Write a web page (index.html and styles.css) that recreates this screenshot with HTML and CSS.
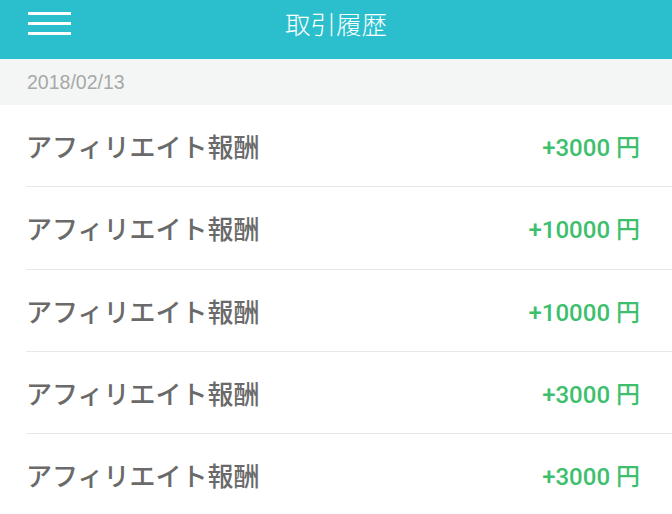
FILE: index.html
```html
<!DOCTYPE html>
<html lang="ja">
<head>
  <meta charset="UTF-8">
  <meta name="viewport" content="width=device-width, initial-scale=1.0">
  <title>取引履歴</title>
  <link rel="stylesheet" href="styles.css">
</head>
<body>
  <header class="topbar">
    <button class="menu-btn" aria-label="menu">
      <span></span>
      <span></span>
      <span></span>
    </button>
    <h1 class="title">取引履歴</h1>
  </header>

  <div class="date-bar">2018/02/13</div>

  <ul class="history">
    <li class="history-row">
      <span class="label">アフィリエイト報酬</span>
      <span class="amount">+3000 円</span>
    </li>
    <li class="history-row">
      <span class="label">アフィリエイト報酬</span>
      <span class="amount">+10000 円</span>
    </li>
    <li class="history-row">
      <span class="label">アフィリエイト報酬</span>
      <span class="amount">+10000 円</span>
    </li>
    <li class="history-row">
      <span class="label">アフィリエイト報酬</span>
      <span class="amount">+3000 円</span>
    </li>
    <li class="history-row">
      <span class="label">アフィリエイト報酬</span>
      <span class="amount">+3000 円</span>
    </li>
  </ul>
</body>
</html>
```

FILE: styles.css
```css
body {
  font-family: "Liberation Sans", "Noto Sans CJK JP", sans-serif;
  background-color: #fff;
  margin: 0;
  padding: 0;
}

/* header bar */
.topbar {
  display: grid;
  grid-template-columns: 1fr auto 1fr;
  align-items: start;
  height: 59px;
  padding: 0 28px;
  background-color: #2bbfcd;
  box-sizing: border-box;
}

.menu-btn {
  display: flex;
  flex-direction: column;
  gap: 7px;
  width: 43px;
  margin-top: 12px;
  padding: 0;
  border: none;
  background: none;
}

.menu-btn span {
  display: block;
  height: 3px;
  background-color: #fff;
}

.title {
  margin: 9px 0 0;
  font-family: "Noto Sans CJK JP", sans-serif;
  font-size: 25.5px;
  font-weight: 300;
  line-height: 28px;
  color: #fff;
}

/* date section */
.date-bar {
  height: 46px;
  padding: 1px 0 0 27px;
  box-sizing: border-box;
  display: flex;
  align-items: center;
  background-color: #f4f6f6;
  font-size: 19.5px;
  color: #a8a8a8;
}

.history {
  list-style: none;
  margin: 0;
  padding: 0;
}

.history-row {
  display: flex;
  justify-content: space-between;
  align-items: center;
  box-sizing: border-box;
  height: 82.33px;
  margin-left: 26px;
  padding-right: 32px;
  border-bottom: 1px solid #e8e8e8;
}

.label {
  font-family: "Noto Sans CJK JP", sans-serif;
  font-size: 26px;
  font-weight: 500;
  color: #6a6a6a;
}

.amount {
  font-family: Roboto, "Noto Sans CJK JP", sans-serif;
  font-size: 24px;
  font-weight: 500;
  color: #3dbf6e;
}
```
